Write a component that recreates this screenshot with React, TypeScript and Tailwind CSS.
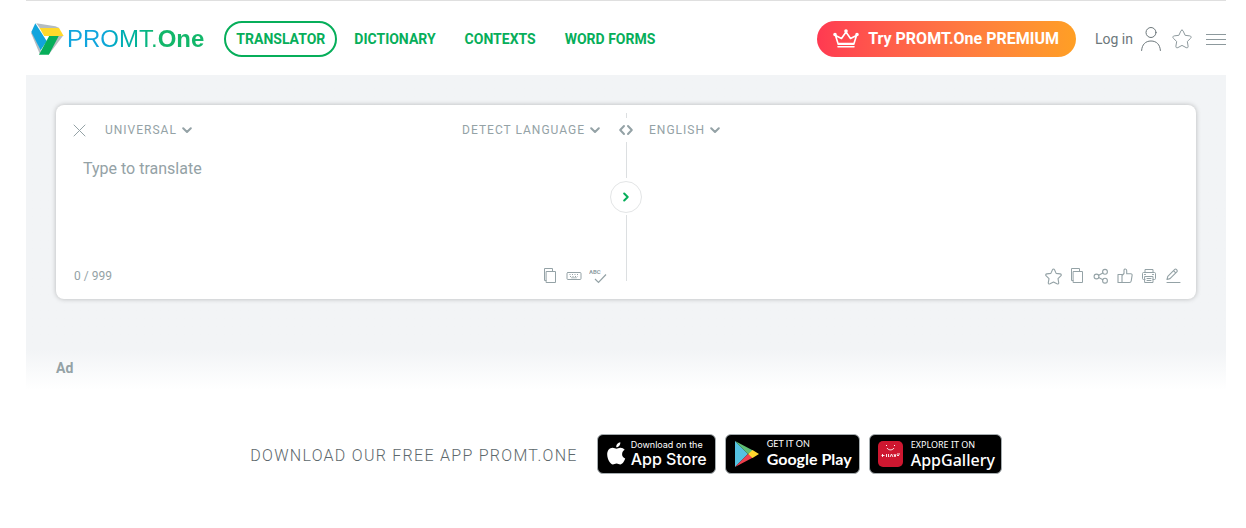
import { useState, type ReactNode } from "react";

type IconProps = { className?: string; children: ReactNode; box: string; stroke?: number };

function Icon({ className, children, box, stroke = 1 }: IconProps) {
  return (
    <svg
      viewBox={box}
      className={className}
      fill="none"
      stroke="currentColor"
      strokeWidth={stroke}
      strokeLinecap="round"
      strokeLinejoin="round"
      aria-hidden="true"
    >
      {children}
    </svg>
  );
}

const STAR =
  "M10 1.2c.6 0 .9.3 1.2.9l1.9 4.2 4.7.6c1.4.2 1.8 1.4.8 2.4l-3.3 3.2.8 4.6c.2 1.5-.7 2.1-2 1.5L10 16.4l-4.1 2.2c-1.3.6-2.2 0-2-1.5l.8-4.6-3.3-3.2c-1-1-.6-2.2.8-2.4l4.7-.6 1.9-4.2c.3-.6.6-.9 1.2-.9z";

function LogoMark() {
  return (
    <svg viewBox="0 0 100 96" className="h-8 w-[33px]" aria-hidden="true">
      <path d="M16 0 74 9 86 15 28 17z" fill="#b4bcc0" />
      <path d="M83 38h14L54 95 50 90z" fill="#b4bcc0" />
      <path d="M0 30 4 28 30 84 26 92z" fill="#b4bcc0" />
      <path d="M26 15h59l14 24H40z" fill="#ffd92b" />
      <path d="M13 0 1 27l28 55L48 55z" fill="#10a5dd" />
      <path d="M55 39h29L54 96H24z" fill="#06ae5a" />
    </svg>
  );
}

function Chevron() {
  return (
    <Icon box="0 0 10 7" stroke={2} className="pointer-events-none h-[7px] w-2.5">
      <path d="M1.2 1.2 5 5l3.8-3.8" />
    </Icon>
  );
}

function Picker({ label, value }: { label: string; value: string }) {
  return (
    <div className="flex items-center gap-[5px]">
      <select
        aria-label={label}
        className="field-sizing-content h-6 cursor-pointer appearance-none bg-transparent text-xs tracking-[1px] outline-none"
      >
        <option>{value}</option>
      </select>
      <Chevron />
    </div>
  );
}

function Tool({ label, children }: { label: string; children: ReactNode }) {
  return (
    <button type="button" aria-label={label} className="flex size-6 items-center justify-center">
      {children}
    </button>
  );
}

function CopyIcon() {
  return (
    <Icon box="0 0 16 16" className="size-4">
      <path d="M4.500 3.500h9v11h-9zM4 12.500H2.500V.5h8V3" />
    </Icon>
  );
}

function SourceTools() {
  return (
    <div className="flex">
      <Tool label="Copy">
        <CopyIcon />
      </Tool>
      <Tool label="Keyboard">
        <Icon box="0 0 16 16" className="size-4">
          <rect x="1" y="4.500" width="14" height="7" rx="1" />
          <path d="M3.500 6.500h9M4 8.500h8" strokeDasharray="1 1.500" strokeLinecap="butt" />
          <path d="M5.500 9.800h5" strokeWidth=".8" />
        </Icon>
      </Tool>
      <Tool label="Spelling">
        <svg viewBox="0 0 18 16" className="h-4 w-[18px]" aria-hidden="true">
          <text x="0" y="6" className="fill-current font-['Roboto',sans-serif] text-[6px] font-bold">
            ABC
          </text>
          <path d="m6 11 3.500 3.500 7.500-8" fill="none" stroke="currentColor" strokeWidth="1.200" />
        </svg>
      </Tool>
    </div>
  );
}

function ResultTools() {
  return (
    <div className="flex">
      <Tool label="Add to favorites">
        <Icon box="0 0 20 20" stroke={1.3} className="size-[17px]">
          <path d={STAR} />
        </Icon>
      </Tool>
      <Tool label="Copy translation">
        <CopyIcon />
      </Tool>
      <Tool label="Share">
        <Icon box="0 0 16 16" stroke={1.1} className="size-4">
          <circle cx="3.500" cy="8.500" r="2.400" />
          <circle cx="12" cy="3.800" r="2.400" />
          <circle cx="12" cy="12.700" r="2.400" />
          <path d="m5.700 7.300 4.200-2.300M5.700 9.600l4.200 2.100" />
        </Icon>
      </Tool>
      <Tool label="Like">
        <Icon box="0 0 16 16" stroke={1.1} className="size-4">
          <path d="M1 6.500h4v8H1zM5 7.500 7 5.500V2.300C7 .4 9.700.6 9.700 2.800v3h4.100c1 0 1.500.7 1.300 1.600l-.9 5.600c-.2 1-.8 1.500-1.700 1.500H5" />
        </Icon>
      </Tool>
      <Tool label="Print">
        <Icon box="0 0 16 16" className="size-4">
          <path d="M4 4.500v-3h8v3M4 11.500H2.500c-.7 0-1-.4-1-1v-5c0-.6.4-1 1-1h11c.6 0 1 .4 1 1v5c0 .6-.3 1-1 1H12M4 8.500h8v6H4zM6 10.500h4M6 12.500h4M3.500 6.500h1M11.500 6.500h1" />
        </Icon>
      </Tool>
      <Tool label="Edit">
        <Icon box="0 0 16 16" stroke={1.1} className="size-4">
          <path d="M2 14.500h13M2 11.500l.8-3.200L9.500 1.600c.7-.7 1.300-.7 1.900-.1l.4.500c.6.600.6 1.200 0 1.800L5 10.600zM8.500 2.700l2.200 2.200" />
        </Icon>
      </Tool>
    </div>
  );
}

function NavLink({ children, active }: { children: string; active?: boolean }) {
  return (
    <a
      href="#"
      className={
        active
          ? "flex h-9 items-center rounded-full border-2 border-[#06ae5a] px-2.5"
          : "flex h-9 items-center border-2 border-transparent px-2.5"
      }
    >
      {children}
    </a>
  );
}

function Header() {
  return (
    <header className="flex h-[75px] items-center border-t border-[#dfdfdf] pt-px pl-[5px]">
      <a href="#" className="flex items-center gap-[3px]">
        <LogoMark />
        <span className="bg-linear-to-r from-[#10a5dd] from-25% to-[#12b76a] to-65% bg-clip-text font-['Liberation_Sans',sans-serif] text-2xl text-transparent">
          PROMT.<b>One</b>
        </span>
      </a>
      <nav className="ml-5 flex gap-[5px] text-sm font-bold whitespace-nowrap text-[#06ae5a]">
        <NavLink active>TRANSLATOR</NavLink>
        <NavLink>DICTIONARY</NavLink>
        <NavLink>CONTEXTS</NavLink>
        <NavLink>WORD FORMS</NavLink>
      </nav>
      <a
        href="#"
        className="ml-auto flex h-9 items-center gap-[9px] rounded-full bg-linear-to-r from-[#ff3951] to-[#ff9f24] pr-[17px] pl-4 font-bold whitespace-nowrap text-white"
      >
        <Icon box="0 0 26 20" stroke={1.6} className="h-5 w-[26px]">
          <path d="M5 14.500 2.500 6.500l6 3L13 3l4.500 6.500 6-3-2.500 8zM5 17.800h16" />
          <path d="M5 15.500h16" strokeWidth="1" />
          <circle cx="2" cy="5.500" r="1" fill="currentColor" />
          <circle cx="13" cy="2" r="1" fill="currentColor" />
          <circle cx="24" cy="5.500" r="1" fill="currentColor" />
        </Icon>
        Try PROMT.One PREMIUM
      </a>
      <a href="#" className="ml-[19px] flex items-center gap-2 text-sm whitespace-nowrap text-[#6c777b]">
        Log in
        <Icon box="0 0 20 24" className="h-6 w-5">
          <circle cx="10" cy="5.500" r="5" />
          <path d="M.6 23.500C1 17.500 4.500 14 10 14s9 3.500 9.400 9.500" />
        </Icon>
      </a>
      <button type="button" aria-label="Favorites" className="ml-[11px] text-[#8d999d]">
        <Icon box="0 0 20 20" className="size-5">
          <path d={STAR} />
        </Icon>
      </button>
      <button type="button" aria-label="Menu" className="ml-3.5 text-[#8d999d]">
        <Icon box="0 0 20 14" className="h-3.5 w-5">
          <path d="M0 2.500h20M0 7.500h20M0 12.500h20" />
        </Icon>
      </button>
    </header>
  );
}

function Translator() {
  const [text, setText] = useState("");
  return (
    <main className="bg-linear-to-b from-[#f2f4f6] from-[87%] to-white px-[30px] pt-[30px]">
      <div className="grid grid-cols-[1fr_32px_1fr] rounded-lg bg-white text-[#94a2a6] shadow-[0_0_5px_rgba(0,0,0,0.25)]">
        <section className="flex flex-col pt-3 pb-[11px] pl-[17px]">
          <div className="flex h-[26px] items-center pr-2.5">
            <button type="button" aria-label="Clear">
              <Icon box="0 0 13 13" className="size-[13px]">
                <path d="m1 1 11 11M12 1 1 12" />
              </Icon>
            </button>
            <div className="ml-[19px]">
              <Picker label="Topic" value="UNIVERSAL" />
            </div>
            <div className="ml-auto">
              <Picker label="Source language" value="DETECT LANGUAGE" />
            </div>
          </div>
          <textarea
            aria-label="Text to translate"
            placeholder="Type to translate"
            maxLength={999}
            value={text}
            onChange={(e) => setText(e.target.value)}
            className="mt-3.5 h-[107px] resize-none pl-2.5 text-base leading-6 outline-none placeholder:text-[#94a2a6]"
          />
          <div className="flex items-center justify-between">
            <span className="pl-px text-xs">{text.length} / 999</span>
            <SourceTools />
          </div>
        </section>

        <div className="flex flex-col items-center pt-2 pb-[18px]">
          <span className="h-[5px] w-px bg-[#dcdfe1]" />
          <button type="button" aria-label="Swap languages" className="flex h-6 items-center">
            <Icon box="0 0 16 12" stroke={2} className="h-3 w-4">
              <path d="M6 2 2.200 6 6 10M10 2l3.800 4L10 10" />
            </Icon>
          </button>
          <span className="h-9 w-px bg-[#dcdfe1]" />
          <button
            type="button"
            aria-label="Translate"
            className="mt-[3px] mb-0.5 flex size-8 items-center justify-center rounded-full border border-[#e3e5e6] text-[#06ae5a]"
          >
            <Icon box="0 0 6 10" stroke={2} className="h-2.5 w-1.5">
              <path d="m1.200 1.500 3.500 3.500-3.500 3.500" />
            </Icon>
          </button>
          <span className="w-px flex-1 bg-[#dcdfe1]" />
        </div>

        <section className="flex flex-col pt-3 pb-[11px] pl-[7px]">
          <div className="flex h-[26px] items-center">
            <Picker label="Target language" value="ENGLISH" />
          </div>
          <output className="flex-1" />
          <div className="flex justify-end pr-[11px]">
            <ResultTools />
          </div>
        </section>
      </div>
      <p className="pt-[59px] pb-3 text-sm font-bold text-[#94a2a6]">Ad</p>
    </main>
  );
}

function StoreBadge({ children, mark, className }: { children: ReactNode; mark: ReactNode; className: string }) {
  return (
    <a href="#" className={`flex h-10 items-center rounded-md border border-[#a6adb0] bg-black text-white ${className}`}>
      {mark}
      <span className="flex flex-col whitespace-nowrap">{children}</span>
    </a>
  );
}

function Footer() {
  return (
    <footer className="flex items-center justify-center pt-11">
      <p className="mr-[19px] pt-1 text-base font-light tracking-[0.08em] whitespace-nowrap text-[#5d686c]">
        DOWNLOAD OUR FREE APP PROMT.ONE
      </p>
      <div className="flex gap-[9px]">
        <StoreBadge
          className="w-[119px] gap-[5px] pl-2 font-['Inter',sans-serif]"
          mark={
            <svg viewBox="0 0 20 24" className="h-6 w-5" fill="white" aria-hidden="true">
              <path d="M16.100 12.300c0-2.100 1.100-3.500 2.600-4.500-1-1.400-2.500-2-4.200-2.100-1.700-.1-3 1-4 1-.9 0-2.400-1-3.900-1C3.600 5.800 1.200 8.300 1.200 12.600c0 4.900 3.200 9.900 5.700 9.900 1.200 0 2.100-.9 3.700-.9 1.500 0 2.200.9 3.700.9 2.100 0 4.100-3.300 4.900-5.900-2-.8-3.100-2.300-3.100-4.300zM13.100 4C14 3 14.500 1.600 14.300.2 12.200.4 10 2.400 10.300 5.300c1 0 2.100-.5 2.800-1.300z" />
            </svg>
          }
        >
          <span className="text-[9px] leading-[10px]">Download on the</span>
          <span className="text-base leading-[18px] font-medium">App Store</span>
        </StoreBadge>
        <StoreBadge
          className="w-[135px] gap-2 pl-2 font-['Lato',sans-serif]"
          mark={
            <svg viewBox="0 0 25 28" className="h-7 w-[25px]" aria-hidden="true">
              <path d="M1 1v26l13-13z" fill="#54c1e0" />
              <path d="M1 1l18 9.500-5 3.500z" fill="#5fbf74" />
              <path d="M1 27l18-9.500-5-3.500z" fill="#ee3f4c" />
              <path d="m14 14 4.500-4L25 14l-6.500 4z" fill="#ffd52e" />
            </svg>
          }
        >
          <span className="text-[9px] leading-[10px]">GET IT ON</span>
          <span className="text-base leading-5 font-bold">Google Play</span>
        </StoreBadge>
        <StoreBadge
          className="w-[133px] gap-2 pl-2 font-['Noto_Sans',sans-serif]"
          mark={
            <svg viewBox="0 0 25 26" className="h-[26px] w-[25px]" fill="none" stroke="white" aria-hidden="true">
              <rect width="25" height="26" rx="5" fill="#ce1730" stroke="none" />
              <path d="M8.500 4v1M16.500 4v1M9 7c1.500 2.500 5.500 2.500 7 0" />
              <path d="M3.500 14.500h3m-2-1.500v3m4-3v3m2 0v-3m1.500 3 1.500-3 1.500 3m1-3 1 3 1-3m1 0h3m-3 1.500h2" strokeWidth=".9" />
            </svg>
          }
        >
          <span className="text-[9px] leading-3">EXPLORE IT ON</span>
          <span className="text-base leading-[19px] font-medium">AppGallery</span>
        </StoreBadge>
      </div>
    </footer>
  );
}

export default function App() {
  return (
    <div className="min-h-screen bg-white pr-5 pl-[26px] font-['Roboto',sans-serif]">
      <Header />
      <Translator />
      <Footer />
    </div>
  );
}
